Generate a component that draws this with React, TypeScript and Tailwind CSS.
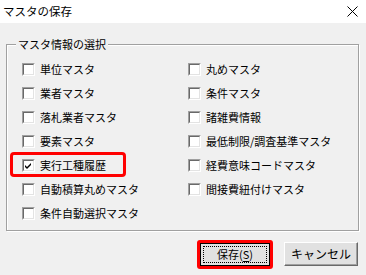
import React from 'react';

type Item = { label: string; checked?: boolean; marked?: boolean };

const leftItems: Item[] = [
  { label: '単位マスタ' },
  { label: '業者マスタ' },
  { label: '落札業者マスタ' },
  { label: '要素マスタ' },
  { label: '実行工種履歴', checked: true, marked: true },
  { label: '自動積算丸めマスタ' },
  { label: '条件自動選択マスタ' },
];

const rightItems: Item[] = [
  { label: '丸めマスタ' },
  { label: '条件マスタ' },
  { label: '諸雑費情報' },
  { label: '最低制限/調査基準マスタ' },
  { label: '経費意味コードマスタ' },
  { label: '間接費紐付けマスタ' },
];

function CheckBox({ checked }: { checked?: boolean }) {
  return (
    <span className="flex h-[13px] w-[13px] shrink-0 border-b border-l border-r border-t border-b-white border-l-[#a0a0a0] border-r-white border-t-[#a0a0a0]">
      <span className="flex h-full w-full items-center justify-center border-b border-l border-r border-t border-b-[#e3e3e3] border-l-[#696969] border-r-[#e3e3e3] border-t-[#696969] bg-white">
        {checked && (
          <svg width="7" height="7" viewBox="0 0 7 7">
            <path d="M0 3 L2 5 L6 1 L6 3 L2 7 L0 5 Z" fill="#000" />
          </svg>
        )}
      </span>
    </span>
  );
}

function Row({ item }: { item: Item }) {
  return (
    <div className="relative flex h-[24px] items-start gap-[5px]">
      <CheckBox checked={item.checked} />
      <span className="-mt-[1px] whitespace-nowrap leading-[15px]">{item.label}</span>
      {item.marked && (
        <span className="pointer-events-none absolute -left-[12px] -top-[7px] h-[25px] w-[116px] rounded-[4px] border-[3px] border-[#ff0000]" />
      )}
    </div>
  );
}

export default function App() {
  return (
    <div
      className="h-[275px] w-[366px] overflow-hidden bg-[#f0f0f0] text-[11px] text-black"
      style={{ fontFamily: '"Noto Sans CJK JP", "Noto Sans", sans-serif' }}
    >
      {/* Title bar */}
      <div className="flex h-[23px] items-center justify-between bg-white pl-[3px] pr-[8px]">
        <span className="text-[11.5px] leading-none">マスタの保存</span>
        <svg width="11" height="11" viewBox="0 0 11 11">
          <path d="M0.5 0.5 L10.5 10.5 M10.5 0.5 L0.5 10.5" stroke="#000" strokeWidth="1" />
        </svg>
      </div>

      {/* Group box */}
      <div className="relative ml-[6px] mt-[21px] h-[187px] w-[353px] border border-[#a0a0a0] shadow-[inset_1px_1px_0_#fff,1px_1px_0_#fff]">
        <span className="absolute -top-[8px] left-[9px] bg-[#f0f0f0] px-[2px] leading-[15px]">
          マスタ情報の選択
        </span>
        <div className="flex pl-[15px] pt-[18px]">
          <div className="flex w-[166px] flex-col">
            {leftItems.map((it) => (
              <Row key={it.label} item={it} />
            ))}
          </div>
          <div className="flex flex-col">
            {rightItems.map((it) => (
              <Row key={it.label} item={it} />
            ))}
          </div>
        </div>
      </div>

      {/* Buttons */}
      <div className="mt-[9px] flex items-start justify-end gap-[11px] pr-[8px]">
        <div className="rounded-[3px] border-[3px] border-[#ff0000]">
          <button className="flex h-[23px] w-[70px] items-center justify-center border border-black bg-[#e1e1e1] p-[2px]">
            <span className="flex h-full w-full items-center justify-center border border-dotted border-black leading-none">
              保存(<span className="underline underline-offset-2">S</span>)
            </span>
          </button>
        </div>
        <button className="mt-[2px] flex h-[24px] w-[74px] items-center justify-center border border-b-[#696969] border-l-white border-r-[#696969] border-t-white bg-[#e1e1e1] text-[12px] shadow-[inset_-1px_-1px_0_#a0a0a0] leading-none">
          キャンセル
        </button>
      </div>
    </div>
  );
}
